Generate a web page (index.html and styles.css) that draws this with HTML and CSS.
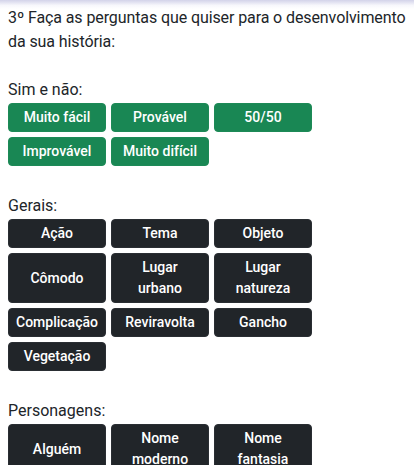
FILE: index.html
```html
<!DOCTYPE html>
<html lang="pt">
<head>
<meta charset="utf-8">
<link rel="stylesheet" href="styles.css">
</head>
<body>
<div class="top-shadow"></div>
<main class="content">
  <p class="intro">3º Faça as perguntas que quiser para o desenvolvimento da sua história:</p>

  <section class="group">
    <p class="label">Sim e não:</p>
    <div class="grid">
      <button class="btn green">Muito fácil</button>
      <button class="btn green">Provável</button>
      <button class="btn green">50/50</button>
      <button class="btn green">Improvável</button>
      <button class="btn green">Muito difícil</button>
    </div>
  </section>

  <section class="group">
    <p class="label">Gerais:</p>
    <div class="grid">
      <button class="btn dark">Ação</button>
      <button class="btn dark">Tema</button>
      <button class="btn dark">Objeto</button>
      <button class="btn dark">Cômodo</button>
      <button class="btn dark">Lugar<br>urbano</button>
      <button class="btn dark">Lugar<br>natureza</button>
      <button class="btn dark">Complicação</button>
      <button class="btn dark">Reviravolta</button>
      <button class="btn dark">Gancho</button>
      <button class="btn dark">Vegetação</button>
    </div>
  </section>

  <section class="group">
    <p class="label">Personagens:</p>
    <div class="grid">
      <button class="btn dark">Alguém</button>
      <button class="btn dark">Nome<br>moderno</button>
      <button class="btn dark">Nome<br>fantasia</button>
    </div>
  </section>
</main>
</body>
</html>
```

FILE: styles.css
```css
html, body {
  margin: 0;
  padding: 0;
  background: #ffffff;
}

body {
  font-family: Roboto, "Liberation Sans", sans-serif;
  color: #212529;
  font-size: 16px;
  line-height: 24px;
}

.top-shadow {
  position: absolute;
  top: 0;
  left: 0;
  right: 0;
  height: 9px;
  background: linear-gradient(to bottom, rgba(196, 196, 226, 0.75), rgba(230, 230, 245, 0.3) 60%, rgba(255, 255, 255, 0));
  pointer-events: none;
}

.content {
  padding: 6px 0 0 8px;
}

.intro {
  margin: 0 0 24px 0;
  letter-spacing: -0.1px;
}

.group {
  margin-bottom: 28px;
}

.label {
  margin: 0;
  height: 24px;
}

.grid {
  display: grid;
  grid-template-columns: repeat(3, 98px);
  column-gap: 5px;
  row-gap: 5px;
  margin-top: 1px;
}

.btn {
  font-family: Roboto, "Liberation Sans", sans-serif;
  font-size: 14px;
  font-weight: 500;
  line-height: 21px;
  padding: 3px 4px;
  border: 1px solid transparent;
  border-radius: 4px;
  color: #ffffff;
  text-align: center;
  margin: 0;
  cursor: pointer;
}

.green {
  background: #198754;
  border-color: #1d8a57;
}

.dark {
  background: #212529;
  border-color: #2a2e33;
}
```
